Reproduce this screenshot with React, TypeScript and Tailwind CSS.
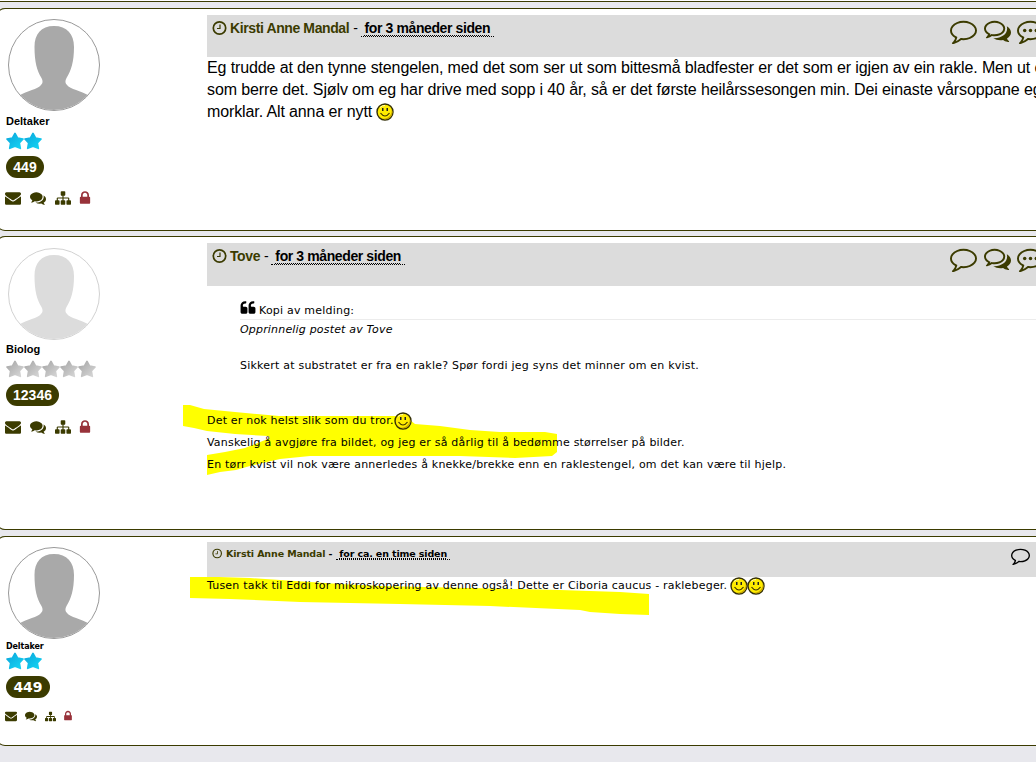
import React from 'react';

const paths = {
  comment:
    'M896 384q-204 0-381.5 69.5t-282 187.5-104.5 255q0 112 71.5 213.5t201.5 175.5l87 50-27 96q-24 91-70 172 152-63 275-171l43-38 57 6q69 8 130 8 204 0 381.5-69.5t282-187.5 104.5-255-104.5-255-282-187.5-381.5-69.5zm896 512q0 174-120 321.5t-326 233-450 85.5q-70 0-145-8-198 175-460 242-49 14-114 22h-5q-15 0-27-10.5t-16-27.5v-1q-3-4-.5-12t2-10 4.5-9.5l6-9 7-8.5 8-9q7-8 31-34.5t34.5-38 31-39.5 32.5-51 27-59 26-76q-157-89-247.5-220t-90.5-281q0-174 120-321.5t326-233 450-85.5 450 85.5 326 233 120 321.5z',
  commentsOutline:
    'M704 384q-153 0-286 52t-211.5 141-78.5 191q0 82 53 158t149 132l97 56-35 84q34-20 62-39l44-31 53 10q78 14 153 14 153 0 286-52t211.5-141 78.5-191-78.5-191-211.5-141-286-52zm0-128q191 0 353.5 68.5t256.5 186.5 94 257-94 257-256.5 186.5-353.5 68.5q-86 0-176-16-124 88-278 128-36 9-86 16h-3q-11 0-20.5-8t-11.5-21q-1-3-1-6.5t.5-6.5 2-6l2.5-5 3.5-5.5 4-5 4.5-5 4-4.5q5-6 23-25t26-29.5 22.5-29 25-38.5 20.5-44q-124-72-195-177t-71-224q0-139 94-257t256.5-186.5 353.5-68.5zm822 1169q10 24 20.5 44t25 38.5 22.5 29 26 29.5 23 25q1 1 4 4.5t4.5 5 4 5 3.5 5.5l2.5 5 2 6 .5 6.5-1 6.5q-3 14-13 22t-22 7q-50-7-86-16-154-40-278-128-90 16-176 16-271 0-472-132 58 4 88 4 161 0 309-45t264-129q125-92 192-212t67-254q0-77-23-152 129 71 204 178t75 230q0 120-71 224.5t-195 176.5z',
  comments:
    'M1408 768q0 139-94 257t-256.5 186.5-353.5 68.5q-86 0-176-16-124 88-278 128-36 9-86 16h-3q-11 0-20.5-8t-11.5-21q-1-3-1-6.5t.5-6.5 2-6l2.5-5 3.5-5.5 4-5 4.5-5 4-4.5q5-6 23-25t26-29.5 22.5-29 25-38.5 20.5-44q-124-72-195-177t-71-224q0-139 94-257t256.5-186.5 353.5-68.5 353.5 68.5 256.5 186.5 94 257zm384 256q0 120-71 224.5t-195 176.5q10 24 20.5 44t25 38.5 22.5 29 26 29.5 23 25q1 1 4 4.5t4.5 5 4 5 3.5 5.5l2.5 5 2 6 .5 6.5-1 6.5q-3 14-13 22t-22 7q-50-7-86-16-154-40-278-128-90 16-176 16-271 0-472-132 58 4 88 4 161 0 309-45t264-129q125-92 192-212t67-254q0-77-23-152 129 71 204 178t75 230z',
  envelope:
    'M1792 710v794q0 66-47 113t-113 47h-1472q-66 0-113-47t-47-113v-794q44 49 101 87 362 246 497 345 57 42 92.5 65.5t94.5 48 110 24.5h2q51 0 110-24.5t94.5-48 92.5-65.5q170-123 498-345 57-39 100-87zm0-294q0 79-49 151t-122 123q-376 261-468 325-10 7-42.5 31t-54 38.5-52 32.5-57.5 27-50 9h-2q-23 0-50-9t-57.5-27-52-32.5-54-38.5-42.5-31q-91-64-262-182.5t-205-142.5q-62-42-117-115.5t-55-136.500q0-78 41.5-130t118.5-52h1472q65 0 112.5 47t47.5 113z',
  sitemap:
    'M1792 1248v320q0 40-28 68t-68 28h-320q-40 0-68-28t-28-68v-320q0-40 28-68t68-28h96v-192h-512v192h96q40 0 68 28t28 68v320q0 40-28 68t-68 28h-320q-40 0-68-28t-28-68v-320q0-40 28-68t68-28h96v-192h-512v192h96q40 0 68 28t28 68v320q0 40-28 68t-68 28h-320q-40 0-68-28t-28-68v-320q0-40 28-68t68-28h96v-192q0-52 38-90t90-38h512v-192h-96q-40 0-68-28t-28-68v-320q0-40 28-68t68-28h320q40 0 68 28t28 68v320q0 40-28 68t-68 28h-96v192h512q52 0 90 38t38 90v192h96q40 0 68 28t28 68z',
  lock: 'M640 768h512v-192q0-106-75-181t-181-75-181 75-75 181v192zm832 96v576q0 40-28 68t-68 28h-960q-40 0-68-28t-28-68v-576q0-40 28-68t68-28h32v-192q0-184 132-316t316-132 316 132 132 316v192h32q40 0 68 28t28 68z',
  quote:
    'M832 960v384q0 80-56 136t-136 56h-384q-80 0-136-56t-56-136v-704q0-104 40.5-198.5t109.5-163.5 163.5-109.5 198.5-40.5h64q26 0 45 19t19 45v128q0 26-19 45t-45 19h-64q-106 0-181 75t-75 181v32q0 40 28 68t68 28h224q80 0 136 56t56 136zm896 0v384q0 80-56 136t-136 56h-384q-80 0-136-56t-56-136v-704q0-104 40.5-198.5t109.5-163.5 163.5-109.5 198.5-40.5h64q26 0 45 19t19 45v128q0 26-19 45t-45 19h-64q-106 0-181 75t-75 181v32q0 40 28 68t68 28h224q80 0 136 56t56 136z',
};

type IconName = keyof typeof paths;

function Icon({ name, className, dots }: { name: IconName; className: string; dots?: boolean }) {
  return (
    <svg viewBox="0 0 1792 1792" fill="currentColor" className={`shrink-0 overflow-visible ${className}`}>
      <path d={paths[name]} />
      {dots && (
        <>
          <circle cx="512" cy="896" r="115" />
          <circle cx="896" cy="896" r="115" />
          <circle cx="1280" cy="896" r="115" />
        </>
      )}
    </svg>
  );
}

function Clock({ className }: { className: string }) {
  return (
    <svg viewBox="0 0 16 16" fill="none" stroke="#3b3b00" className={`shrink-0 ${className}`}>
      <circle cx="7.500" cy="8" r="6.200" strokeWidth="1.700" />
      <path d="M8 4.500V8.500H5" strokeWidth="1.200" />
    </svg>
  );
}

function Avatar({ faded }: { faded?: boolean }) {
  return (
    <div
      className={`ml-0.5 size-[92px] shrink-0 overflow-hidden rounded-full border ${
        faded ? 'border-[#d2d2d2] text-[#dcdcdc]' : 'border-[#999] text-[#a9a9a9]'
      }`}
    >
      <svg viewBox="0 0 90 90" fill="currentColor" className="size-[90px]">
        <path d="M45 6C32 6 25.500 14 25.500 27C25.500 42 28 51 32.500 58C34 61 34 63 32 65C29 69 18 71 10 75.500L0 90H90L80 75.500C72 71 61 69 58 65C56 63 56 61 57.500 58C62 51 65 42 65 27C65 14 58 6 45 6Z" />
      </svg>
    </div>
  );
}

function Stars({ count, gray }: { count: number; gray?: boolean }) {
  const id = gray ? 'star-gray' : 'star-cyan';
  return (
    <div className="flex h-[18px]">
      {Array.from({ length: count }, (_, i) => (
        <svg key={i} viewBox="0 0 18 18" className="size-[18px]">
          <defs>
            <linearGradient id={id} x1="0" y1="0" x2="1" y2="1">
              <stop offset="0" stopColor={gray ? '#a5a5a5' : '#0aa6dc'} />
              <stop offset="1" stopColor={gray ? '#d9d9d9' : '#16d6f4'} />
            </linearGradient>
          </defs>
          <path
            d="M9 1.500L11.500 6L17 7L13.300 11L14.300 16.300L9 14.200L3.700 16.300L4.700 11L1 7L6.500 6Z"
            fill={`url(#${id})`}
            stroke={`url(#${id})`}
            strokeWidth="1.700"
            strokeLinejoin="round"
          />
        </svg>
      ))}
    </div>
  );
}

function Smiley({ className = '' }: { className?: string }) {
  return (
    <svg viewBox="0 0 18 18" className={`size-[18px] shrink-0 ${className}`}>
      <circle cx="9" cy="9" r="8" fill="#ffec00" stroke="#332f08" strokeWidth="1.400" />
      <path d="M15.500 6A7 7 0 0 1 6 15.500A8 8 0 0 0 15.500 6" fill="#c9a900" />
      <path d="M4 4.500Q6 2.300 9 2.500" stroke="#fffbb0" fill="none" />
      <rect x="6" y="5" width="1.500" height="3" fill="#222" />
      <rect x="10.500" y="5" width="1.500" height="3" fill="#222" />
      <path d="M4.500 10Q9 16 13.500 10" fill="none" stroke="#3a3000" strokeWidth="1.200" />
    </svg>
  );
}

function Tools({ small, className = '' }: { small?: boolean; className?: string }) {
  return small ? (
    <div className={`-ml-px flex h-3 items-center text-[#3b3b00] ${className}`}>
      <Icon name="envelope" className="size-[12px]" />
      <Icon name="comments" className="ml-2 size-[12px]" />
      <Icon name="sitemap" className="ml-2 size-[11px]" />
      <Icon name="lock" className="ml-[6px] size-[12px] text-[#98323a]" />
    </div>
  ) : (
    <div className={`-ml-px flex h-4 items-center text-[#3b3b00] ${className}`}>
      <Icon name="envelope" className="size-4" />
      <Icon name="comments" className="ml-[9px] size-4" />
      <Icon name="sitemap" className="ml-[9px] size-4" />
      <Icon name="lock" className="ml-[6px] size-4 text-[#98323a]" />
    </div>
  );
}

function Badge({ children, className }: { children: string; className: string }) {
  return (
    <div
      className={`mt-[6px] flex h-[22px] items-center justify-center rounded-full bg-[#3b3b00] font-bold text-white ${className}`}
    >
      {children}
    </div>
  );
}

function PostHeader({ name, time, className }: { name: string; time: string; className: string }) {
  return (
    <div
      className={`flex items-start overflow-hidden bg-[#dcdcdc] pl-[5px] pt-[5px] text-[14px] font-bold leading-4 tracking-[-.39px] ${className}`}
    >
      <Clock className="size-4" />
      <span className="ml-0.5 text-[#3b3b00]">{name}</span>
      <span className="ml-1 font-normal">-</span>
      <span className="ml-[3px] h-[17px] border-b border-dotted border-black px-[4px] underline decoration-dotted decoration-1 underline-offset-2">
        {time}
      </span>
      <div className="ml-auto flex w-[86px] shrink-0 text-[#3b3b00]">
        <Icon name="comment" className="-mt-[3px] size-[27px]" />
        <Icon name="commentsOutline" className="-mt-[3px] ml-[7px] size-[27px]" />
        <Icon name="comment" dots className="-mt-[3px] ml-[6px] size-[27px]" />
      </div>
    </div>
  );
}

export default function App() {
  const card = 'relative -ml-1 flex shrink-0 rounded-l-[9px] border border-r-0 border-[#3b3b00] bg-white pl-[9px]';
  const verdana = "font-['DejaVu_Sans',sans-serif]";
  return (
    <main className="flex h-[762px] w-[1036px] flex-col overflow-hidden bg-[#e8e8ed] font-['Liberation_Sans',sans-serif] text-black">
      <div className="-ml-1 h-[2px] shrink-0 rounded-bl-[9px] border-b border-[#3b3b00] bg-white" />

      <article className={`${card} mt-[6px] h-[223px]`}>
        <aside className="w-[201px] shrink-0 pt-[10px]">
          <Avatar />
          <div className="mt-[3px] h-[18px] text-[11px] font-bold leading-[14px]">Deltaker</div>
          <Stars count={2} />
          <Badge className="w-[38px] text-[14px]">449</Badge>
          <Tools className="mt-3" />
        </aside>
        <section className="min-w-0 flex-1 pt-[6px]">
          <PostHeader name="Kirsti Anne Mandal" time="for 3 måneder siden" className="h-[42px]" />
          <div className="overflow-hidden whitespace-nowrap text-[16px] leading-[22px] tracking-[-.118px]">
            <p>Eg trudde at den tynne stengelen, med det som ser ut som bittesmå bladfester er det som er igjen av ein rakle. Men ut e</p>
            <p>som berre det. Sjølv om eg har drive med sopp i 40 år, så er det første heilårssesongen min. Dei einaste vårsoppane eg</p>
            <p className="flex items-center">
              morklar. Alt anna er nytt <Smiley className="ml-1" />
            </p>
          </div>
        </section>
      </article>

      <article className={`${card} mt-[5px] h-[294px]`}>
        <svg className="absolute left-[186px] top-[165px] h-[75px] w-[375px]" viewBox="183 402 375 75" fill="#ff0">
          <path d="M183 405L190 405L204 409L235 412L279 416H405L415 424L440 426L470 430L500 432H545L557 434V452L552 456L515 458L460 456H310L280 459L250 466L236 470L220 472L207 475V455L225 452L245 448L270 438L268 436L235 434L207 431L194 428L183 426Z" />
        </svg>
        <aside className="w-[201px] shrink-0 pt-[11px]">
          <Avatar faded />
          <div className="mt-[2px] h-[18px] text-[11px] font-bold leading-[14px]">Biolog</div>
          <Stars count={5} gray />
          <Badge className="w-[53px] text-[14px]">12346</Badge>
          <Tools className="mt-[13px]" />
        </aside>
        <section className="relative min-w-0 flex-1 pt-[6px]">
          <PostHeader name="Tove" time="for 3 måneder siden" className="h-[43px]" />
          <div className={`whitespace-nowrap text-[11px] ${verdana}`}>
            <blockquote className="ml-[33px] pt-3">
              <div className="flex h-[22px] items-center border-b border-[#ececec]">
                <Icon name="quote" className="-mt-px size-4" />
                <span className="ml-[3px] mt-[5px] tracking-[.21px]">Kopi av melding:</span>
              </div>
              <p className="pt-px leading-[18px] italic tracking-[.18px]">Opprinnelig postet av Tove</p>
              <p className="mt-[18px] leading-[18px] tracking-[.22px]">
                Sikkert at substratet er fra en rakle? Spør fordi jeg syns det minner om en kvist.
              </p>
            </blockquote>
            <div className="mt-[35px] leading-[22px] tracking-[.2px]">
              <p className="flex items-center">
                Det er nok helst slik som du tror.
                <Smiley />
              </p>
              <p>Vanskelig å avgjøre fra bildet, og jeg er så dårlig til å bedømme størrelser på bilder.</p>
              <p>En tørr kvist vil nok være annerledes å knekke/brekke enn en raklestengel, om det kan være til hjelp.</p>
            </div>
          </div>
        </section>
      </article>

      <article className={`${card} ${verdana} mt-[6px] h-[210px]`}>
        <svg className="absolute left-[193px] top-[40px] h-[39px] w-[460px]" viewBox="190 577 460 39" fill="#ff0">
          <path d="M190 577H219L250 578L340 584L380 586L470 588L560 590L620 592L649 594V615L620 614L590 612L580 610L490 606L400 604L300 602L230 599L190 598Z" />
        </svg>
        <aside className="w-[201px] shrink-0 pt-[10px]">
          <Avatar />
          <div className="mt-[2px] h-[11px] text-[8px] font-bold leading-[11px] tracking-[-.1px]">Deltaker</div>
          <Stars count={2} />
          <Badge className="w-[44px] text-[14px]">449</Badge>
          <Tools small className="mt-3" />
        </aside>
        <section className="relative min-w-0 flex-1 pt-[5px]">
          <div className="flex h-[35px] items-start bg-[#dcdcdc] pl-[5px] pt-[6px] text-[9.500px] font-bold leading-3 tracking-[-.13px]">
            <Clock className="size-[11px]" />
            <span className="ml-[3px] text-[#3b3b00]">Kirsti Anne Mandal</span>
            <span className="ml-[3px]">-</span>
            <span className="ml-1 h-3 whitespace-nowrap border-b border-dotted border-black px-[3px] underline decoration-dotted decoration-1 underline-offset-1">
              for ca. en time siden
            </span>
            <Icon name="comment" className="-mt-[2px] ml-auto mr-[6px] size-[19px]" />
          </div>
          <p className="flex h-[18px] items-center whitespace-nowrap text-[11px] tracking-[.2px]">
            Tusen takk til Eddi for mikroskopering av denne også! Dette er Ciboria caucus - raklebeger.
            <Smiley className="ml-[3px]" />
            <Smiley className="-ml-px" />
          </p>
        </section>
      </article>
    </main>
  );
}
